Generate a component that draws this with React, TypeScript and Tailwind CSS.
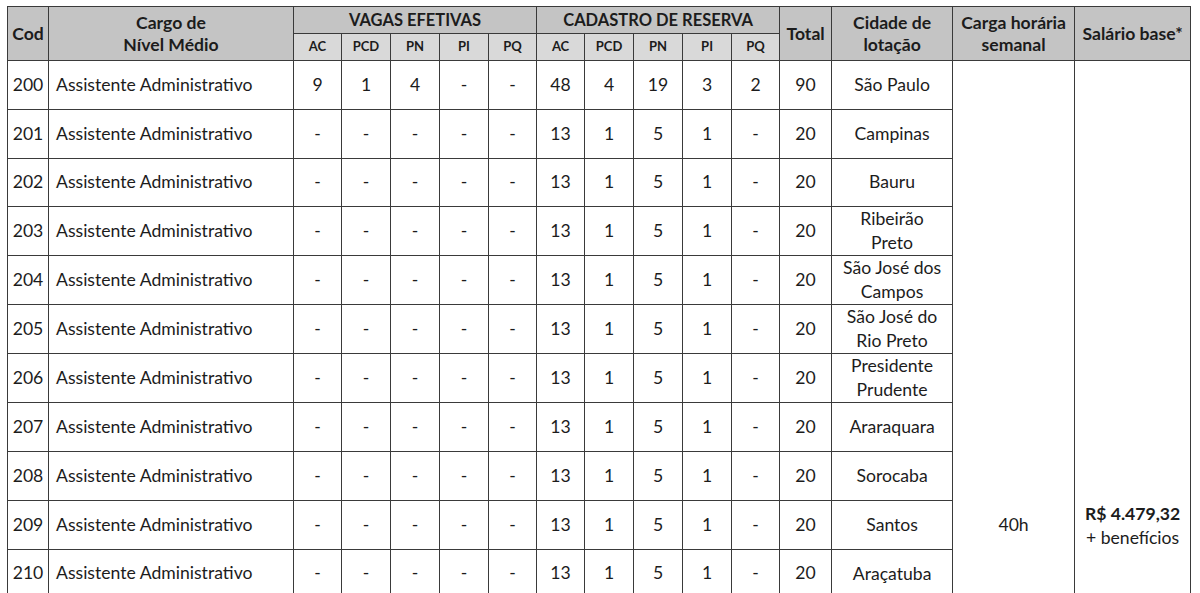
import React from "react";

const widths = [41, 245, 48, 49, 49, 49, 48, 48, 49, 49, 49, 48, 52, 121, 122, 116];

type Row = { cod: string; v: string[]; total: string; city: React.ReactNode };

const dash = ["-", "-", "-", "-", "-"];
const res = ["13", "1", "5", "1", "-"];

const rows: Row[] = [
  { cod: "200", v: ["9", "1", "4", "-", "-", "48", "4", "19", "3", "2"], total: "90", city: "São Paulo" },
  { cod: "201", v: [...dash, ...res], total: "20", city: "Campinas" },
  { cod: "202", v: [...dash, ...res], total: "20", city: "Bauru" },
  { cod: "203", v: [...dash, ...res], total: "20", city: <>Ribeirão<br />Preto</> },
  { cod: "204", v: [...dash, ...res], total: "20", city: <>São José dos<br />Campos</> },
  { cod: "205", v: [...dash, ...res], total: "20", city: <>São José do<br />Rio Preto</> },
  { cod: "206", v: [...dash, ...res], total: "20", city: <>Presidente<br />Prudente</> },
  { cod: "207", v: [...dash, ...res], total: "20", city: "Araraquara" },
  { cod: "208", v: [...dash, ...res], total: "20", city: "Sorocaba" },
  { cod: "209", v: [...dash, ...res], total: "20", city: "Santos" },
  { cod: "210", v: [...dash, ...res], total: "20", city: "Araçatuba" },
];

const cell = "border border-[#3a3a3a] text-center align-middle p-0";
const h1 = "border border-[#3a3a3a] bg-[#c4c4c4] text-center align-middle font-bold p-0 leading-[22px]";
const h2 = "border border-[#3a3a3a] bg-[#d9d9d9] text-center align-middle font-bold text-[13px] p-0";

export default function App() {
  return (
    <div className="h-[593px] w-[1200px] overflow-hidden bg-white pl-[7px] pt-[6px]">
      <table
        className="table-fixed border-collapse text-[17.6px] text-[#1c1c1c]"
        style={{ width: 1184, fontFamily: "Lato, 'Open Sans', sans-serif" }}
      >
        <colgroup>
          {widths.map((w, i) => (
            <col key={i} style={{ width: w }} />
          ))}
        </colgroup>
        <thead>
          <tr className="h-[27px]">
            <th rowSpan={2} className={h1}>Cod</th>
            <th rowSpan={2} className={h1}>Cargo de<br />Nível Médio</th>
            <th colSpan={5} className={h1 + " text-[16.5px]"}>VAGAS EFETIVAS</th>
            <th colSpan={5} className={h1 + " text-[16.5px]"}>CADASTRO DE RESERVA</th>
            <th rowSpan={2} className={h1}>Total</th>
            <th rowSpan={2} className={h1}>Cidade de<br />lotação</th>
            <th rowSpan={2} className={h1}>Carga horária<br />semanal</th>
            <th rowSpan={2} className={h1}>Salário base*</th>
          </tr>
          <tr className="h-[27px]">
            {["AC", "PCD", "PN", "PI", "PQ", "AC", "PCD", "PN", "PI", "PQ"].map((t, i) => (
              <th key={i} className={h2}>{t}</th>
            ))}
          </tr>
        </thead>
        <tbody>
          {rows.map((r, ri) => (
            <tr key={r.cod} className="h-[48.8px]">
              <td className={cell}>{r.cod}</td>
              <td className={cell + " text-left pl-[7px]"}>Assistente Administrativo</td>
              {r.v.map((x, i) => (
                <td key={i} className={cell}>{x}</td>
              ))}
              <td className={cell}>{r.total}</td>
              <td className={cell + " leading-[24px]"}>{r.city}</td>
              {ri === 0 && (
                <>
                  <td rowSpan={rows.length} className={cell + " !align-bottom pb-[61px] leading-[24px]"}>40h</td>
                  <td rowSpan={rows.length} className={cell + " !align-bottom pb-[48px] leading-[24px]"}>
                    <span className="font-bold">R$ 4.479,32</span>
                    <br />+ benefícios
                  </td>
                </>
              )}
            </tr>
          ))}
        </tbody>
      </table>
    </div>
  );
}
